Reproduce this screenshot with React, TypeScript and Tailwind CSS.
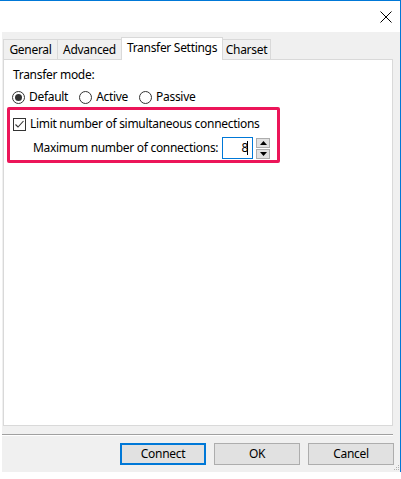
import React from 'react';

const font = { fontFamily: '"Segoe UI", "Noto Sans", sans-serif', letterSpacing: '-0.3px' };

function Radio({ checked, label }: { checked?: boolean; label: string }) {
  return (
    <div className="flex items-center gap-[4px]">
      <span className="w-[13px] h-[13px] rounded-full border border-[#333] bg-white flex items-center justify-center">
        {checked && <span className="w-[7px] h-[7px] rounded-full bg-[#333]" />}
      </span>
      <span>{label}</span>
    </div>
  );
}

function Tab({ label, w, active }: { label: string; w: string; active?: boolean }) {
  if (active) {
    return (
      <div className={`${w} h-[23px] bg-white border border-b-0 border-[#d9d9d9] flex items-center justify-center -mb-px relative z-10 pb-[3px]`}>
        {label}
      </div>
    );
  }
  return (
    <div className={`${w} h-[20px] border border-b-0 border-[#d9d9d9] flex items-center justify-center`}>
      {label}
    </div>
  );
}

export default function App() {
  return (
    <div className="w-[401px] h-[479px] bg-white text-[12px] text-black whitespace-nowrap" style={font}>
      <div className="w-[401px] border-t border-r border-[#0078d7]">
        {/* title bar */}
        <div className="h-[31px] flex justify-end items-center pr-[8px]">
          <svg width="12" height="12" viewBox="0 0 12 12" className="mt-[1px]">
            <path d="M0.5 0.5 L11.5 11.5 M11.5 0.5 L0.5 11.5" stroke="#000" strokeWidth="1" />
          </svg>
        </div>

        <div className="ml-[2px] h-[440px] bg-[#f0f0f0] flex flex-col">
          <div className="pl-[1px] pt-[5px] flex items-end h-[27px]">
            <Tab label="General" w="w-[55px]" />
            <div className="-ml-px"><Tab label="Advanced" w="w-[65px]" /></div>
            <div className="-ml-px"><Tab label="Transfer Settings" w="w-[102px]" active /></div>
            <div className="-ml-px"><Tab label="Charset" w="w-[49px]" /></div>
          </div>

          <div className="ml-[1px] w-[390px] h-[367px] bg-white border border-[#d9d9d9] pl-[9px] pt-[6px]">
            <div className="h-[18px] flex items-center">Transfer mode:</div>
            <div className="h-[20px] mt-[3px] flex items-center gap-[11px] -ml-[1px]">
              <Radio checked label="Default" />
              <Radio label="Active" />
              <Radio label="Passive" />
            </div>

            <div className="-ml-[6px] w-[273px] h-[56px] border-[3px] border-[#ec1559] rounded-[2px] pl-[3px] pt-[7px]">
              <div className="h-[14px] flex items-center gap-[4px]">
                <span className="w-[13px] h-[13px] border border-[#333] bg-white flex items-center justify-center">
                  <svg width="11" height="11" viewBox="0 0 11 11">
                    <path d="M1.5 5.5 L4 8 L9.5 2" stroke="#333" strokeWidth="1.1" fill="none" />
                  </svg>
                </span>
                <span>Limit number of simultaneous connections</span>
              </div>
              <div className="mt-[6px] pl-[20px] flex items-center">
                <span className="w-[189px]">Maximum number of connections:</span>
                <div className="w-[31px] h-[22px] border border-[#0078d7] bg-white flex items-center justify-end pr-[4px]">
                  <span>8</span>
                  <span className="w-px h-[14px] bg-black -ml-[1px]" />
                </div>
                <div className="ml-[3px] flex flex-col gap-[1px]">
                  <div className="w-[14px] h-[10px] bg-[#e1e1e1] border border-[#adadad] flex items-center justify-center">
                    <svg width="7" height="4" viewBox="0 0 7 4"><path d="M0 4 L3.5 0 L7 4 Z" fill="#000" /></svg>
                  </div>
                  <div className="w-[14px] h-[10px] bg-[#e1e1e1] border border-[#adadad] flex items-center justify-center">
                    <svg width="7" height="4" viewBox="0 0 7 4"><path d="M0 0 L3.5 4 L7 0 Z" fill="#000" /></svg>
                  </div>
                </div>
              </div>
            </div>
          </div>

          <div className="mt-[8px] w-[391px] h-px bg-[#a0a0a0]" />
          <div className="h-px w-[391px] bg-white" />

          <div className="mt-[7px] flex justify-end gap-[8px] pr-[6px] relative">
            <button className="w-[86px] h-[22px] bg-[#e1e1e1] border-2 border-[#0078d7]">Connect</button>
            <button className="w-[86px] h-[22px] bg-[#e1e1e1] border border-[#adadad]">OK</button>
            <button className="w-[86px] h-[22px] bg-[#e1e1e1] border border-[#adadad]">Cancel</button>
            <svg width="7" height="7" viewBox="0 0 7 7" className="absolute right-[0px] bottom-[-6px]">
              <rect x="5" y="1" width="1" height="1" fill="#b0b0b0" />
              <rect x="3" y="3" width="1" height="1" fill="#b0b0b0" />
              <rect x="5" y="3" width="1" height="1" fill="#b0b0b0" />
              <rect x="1" y="5" width="1" height="1" fill="#b0b0b0" />
              <rect x="3" y="5" width="1" height="1" fill="#b0b0b0" />
              <rect x="5" y="5" width="1" height="1" fill="#b0b0b0" />
            </svg>
          </div>
        </div>
      </div>
    </div>
  );
}
